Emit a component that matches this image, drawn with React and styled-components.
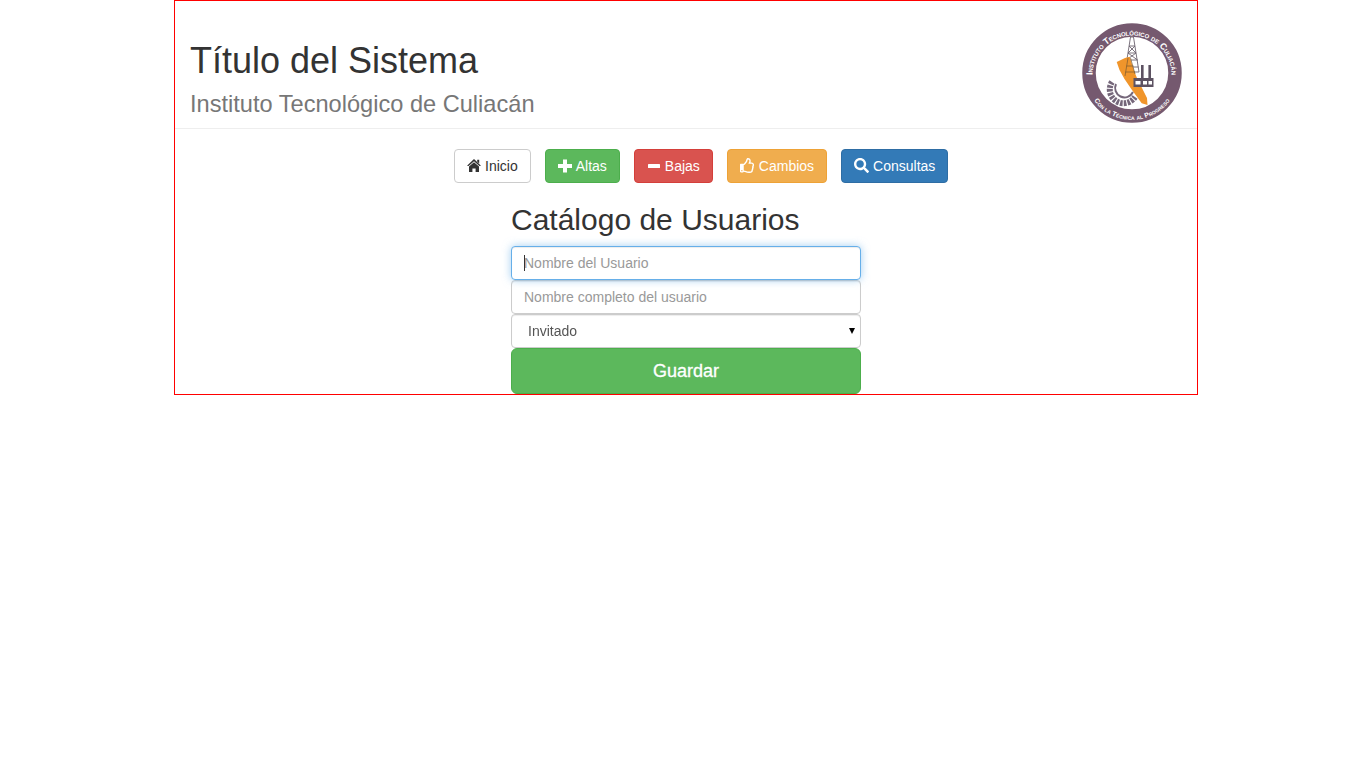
import styled, { createGlobalStyle } from "styled-components";
import { FaRegThumbsUp, FaSearch } from "react-icons/fa";

const GlobalStyle = createGlobalStyle`
	* {
		box-sizing: border-box;
	}
	body {
		margin: 0;
		background: #fff;
		color: #333;
		font-family: "Liberation Sans", Arial, sans-serif;
		font-size: 14px;
		line-height: 1.42857;
	}
`;

const variants = {
	default: { bg: "#fff", border: "#ccc", color: "#333" },
	success: { bg: "#5cb85c", border: "#4cae4c", color: "#fff" },
	danger: { bg: "#d9534f", border: "#d43f3a", color: "#fff" },
	warning: { bg: "#f0ad4e", border: "#eea236", color: "#fff" },
	primary: { bg: "#337ab7", border: "#2e6da4", color: "#fff" },
};

function HomeIcon() {
	return (
		<svg width="14" height="14" viewBox="0 0 14 14" fill="currentColor">
			<path d="M7 0 L14 6.8 L12.4 7 L7 2.2 L1.6 7 L0 6.8 Z" />
			<path d="M10.2 0.8 H12.2 V4.6 L10.2 2.8 Z" />
			<path d="M7 3.2 L12 7.6 V13 H8.6 V9.4 H5.4 V13 H2 V7.6 Z" />
		</svg>
	);
}

function PlusIcon() {
	return (
		<svg width="14" height="14" viewBox="0 0 14 14" fill="currentColor">
			<path d="M5 0.5 H9 V5 H14 V9 H9 V13.5 H5 V9 H0 V5 H5 Z" />
		</svg>
	);
}

function MinusIcon() {
	return (
		<svg width="14" height="14" viewBox="0 0 14 14" fill="currentColor">
			<rect x="1" y="5" width="12" height="4" rx="0.5" />
		</svg>
	);
}

const menu = [
	{ label: "Inicio", variant: "default", icon: <HomeIcon /> },
	{ label: "Altas", variant: "success", icon: <PlusIcon /> },
	{ label: "Bajas", variant: "danger", icon: <MinusIcon /> },
	{ label: "Cambios", variant: "warning", icon: <FaRegThumbsUp size={15} /> },
	{ label: "Consultas", variant: "primary", icon: <FaSearch size={15} /> },
];

function Logo() {
	return (
		<svg width="102" height="102" viewBox="0 0 102 102">
			<defs>
				<path id="arcTop" d="M 11.5 53 A 39.5 39.5 0 0 1 90.5 53" />
				<path id="arcBottom" d="M 13 78.6 A 47 47 0 0 0 89 78.6" />
			</defs>
			<circle cx="51" cy="51" r="43" fill="#fff" stroke="#75596f" strokeWidth="13.5" />
			<text fill="#fff" fontSize="9" fontWeight="700" fontFamily="Liberation Sans, sans-serif" textLength="124" style={{ fontVariant: "small-caps" }}>
				<textPath href="#arcTop">Instituto Tecnológico de Culiacán</textPath>
			</text>
			<text fill="#fff" fontSize="6.8" fontWeight="700" fontFamily="Liberation Sans, sans-serif" textLength="88" style={{ fontVariant: "small-caps" }}>
				<textPath href="#arcBottom">Con la Técnica al Progreso</textPath>
			</text>
			{/* engrane */}
			<path d="M31 60 A 13 13 0 0 0 54 75" fill="none" stroke="#75677a" strokeWidth="6" strokeDasharray="2.6 1.1" />
			<path d="M35 62 A 9 9 0 0 0 52 70" fill="none" stroke="#75677a" strokeWidth="2" />
			{/* torre */}
			<g fill="none" stroke="#6d6470" strokeWidth="0.9">
				<path d="M49.5 15 L44 50 M52.5 15 L58 50" />
				<path d="M49.5 15 H52.5 M48 24 H54 M47 31 H55 M45.5 38 H56.5 M44.5 45 H57.5 M44 50 H58" />
				<path d="M48 24 L55 31 M54 24 L47 31 M47 31 L56.5 38 M55 31 L45.5 38" />
			</g>
			{/* mapa */}
			<polygon
				points="35.7,40 44,36 48.5,34.7 53.5,50 56,56 61,66 66,76 66.5,83 60.7,81.3 51,68 43.5,57 38.5,48"
				fill="#f0952b"
			/>
			<g fill="none" stroke="#7a5a30" strokeWidth="0.7">
				<path d="M47 36 L44 54 M49.5 36 L54 52 M45.5 44 H52.5 M44.5 50 H54" />
			</g>
			{/* fabrica */}
			<rect x="60" y="43" width="2.6" height="13" fill="#5d5262" />
			<rect x="67.4" y="43" width="2.6" height="13" fill="#5d5262" />
			<rect x="52.5" y="56" width="20" height="9" fill="#5d5262" />
			<rect x="54.5" y="59" width="5" height="3.5" fill="#fff" />
			<rect x="62" y="59" width="4" height="3.5" fill="#fff" />
			<rect x="67.5" y="59" width="3.5" height="3.5" fill="#fff" />
		</svg>
	);
}

export default function App() {
	return (
		<>
			<GlobalStyle />
			<Wrapper>
				<Header>
					<div>
						<Title>Título del Sistema</Title>
						<Subtitle>Instituto Tecnológico de Culiacán</Subtitle>
					</div>
					<Logo />
				</Header>
				<Menu>
					{menu.map(({ label, variant, icon }) => (
						<MenuButton key={label} $variant={variant}>
							{icon}
							{label}
						</MenuButton>
					))}
				</Menu>
				<Form onSubmit={(e) => e.preventDefault()}>
					<Heading>Catálogo de Usuarios</Heading>
					<FocusField>
						<Input type="text" placeholder="Nombre del Usuario" autoFocus />
					</FocusField>
					<Input type="text" placeholder="Nombre completo del usuario" />
					<SelectField>
						<Select defaultValue="Invitado">
							<option>Invitado</option>
							<option>Administrador</option>
						</Select>
					</SelectField>
					<SaveButton type="submit">Guardar</SaveButton>
				</Form>
			</Wrapper>
		</>
	);
}

const Wrapper = styled.div`
	width: 1024px;
	margin-left: 174px;
	border: 1px solid #f00;
`;

const Header = styled.header`
	display: flex;
	justify-content: space-between;
	align-items: flex-end;
	padding: 21px 14px 4px 15px;
	border-bottom: 1px solid #eee;
`;

const Title = styled.h1`
	margin: 0 0 11px;
	font-size: 36px;
	font-weight: 500;
	line-height: 1.1;
`;

const Subtitle = styled.div`
	margin-bottom: 6px;
	color: #777;
	font-size: 23.6px;
	line-height: 1.1;
`;

const Menu = styled.nav`
	display: flex;
	gap: 14px;
	margin-top: 20px;
	padding-left: 279px;
`;

const MenuButton = styled.button`
	display: inline-flex;
	align-items: center;
	gap: 4px;
	height: 34px;
	padding: 1px 12px 0;
	border: 1px solid ${(p) => variants[p.$variant].border};
	border-radius: 4px;
	background: ${(p) => variants[p.$variant].bg};
	color: ${(p) => variants[p.$variant].color};
	font: inherit;
	cursor: pointer;

	svg {
		margin-top: -2px;
	}
`;

const Form = styled.form`
	display: flex;
	flex-direction: column;
	width: 350px;
	margin: 20px auto 0;
`;

const Heading = styled.h2`
	margin: 0 0 10px;
	font-size: 30px;
	font-weight: 500;
	line-height: 1.1;
`;

const FocusField = styled.div`
	position: relative;

	&::after {
		content: "";
		position: absolute;
		left: 13px;
		top: 9px;
		width: 1px;
		height: 16px;
		background: #333;
	}
`;

const Input = styled.input`
	display: block;
	width: 100%;
	height: 34px;
	padding: 6px 12px;
	border: 1px solid #ccc;
	border-radius: 4px;
	background: #fff;
	color: #555;
	font: inherit;
	caret-color: transparent;
	box-shadow: inset 0 1px 1px rgba(0, 0, 0, 0.075);

	&::placeholder {
		color: #999;
	}

	&:focus {
		border-color: #66afe9;
		outline: 0;
		box-shadow: inset 0 1px 1px rgba(0, 0, 0, 0.075), 0 0 8px rgba(102, 175, 233, 0.6);
	}
`;

const SelectField = styled.div`
	position: relative;

	&::after {
		content: "";
		position: absolute;
		right: 6px;
		top: 14px;
		border-style: solid;
		border-width: 6px 3.5px 0;
		border-color: #000 transparent transparent;
		pointer-events: none;
	}
`;

const Select = styled.select`
	display: block;
	width: 100%;
	height: 34px;
	padding: 7px 12px 5px 16px;
	border: 1px solid #ccc;
	border-radius: 4px;
	background: #fff;
	color: #555;
	font: inherit;
	appearance: none;
	box-shadow: inset 0 1px 1px rgba(0, 0, 0, 0.075);
`;

const SaveButton = styled.button`
	height: 46px;
	padding: 11px 16px 9px;
	border: 1px solid #4cae4c;
	border-radius: 6px;
	background: #5cb85c;
	color: #fff;
	font: inherit;
	font-size: 18px;
	line-height: 1.33333;
	-webkit-text-stroke: 0.3px #fff;
	cursor: pointer;
`;
